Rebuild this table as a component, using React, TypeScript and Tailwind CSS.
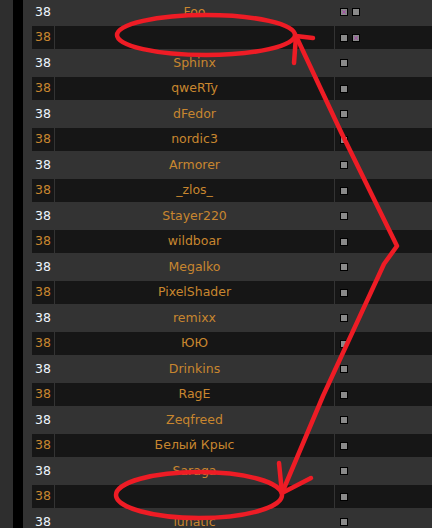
type Row = { name: string; checks?: ("on" | "off")[] };

const rows: Row[] = [
  { name: "Foo", checks: ["on", "off"] },
  { name: "", checks: ["off", "on"] },
  { name: "Sphinx" },
  { name: "qweRTy" },
  { name: "dFedor" },
  { name: "nordic3" },
  { name: "Armorer" },
  { name: "_zlos_" },
  { name: "Stayer220" },
  { name: "wildboar" },
  { name: "Megalko" },
  { name: "PixelShader" },
  { name: "remixx" },
  { name: "ЮЮ" },
  { name: "Drinkins" },
  { name: "RagE" },
  { name: "Zeqfreed" },
  { name: "Белый Крыс" },
  { name: "Saraga" },
  { name: "" },
  { name: "lunatic" },
];

function Box({ on }: { on?: boolean }) {
  return (
    <span className="w-[8px] h-[8px] border border-black bg-[#8a8a8a] flex items-center justify-center">
      {on && (
        <svg width={6} height={6} viewBox="0 0 6 6">
          <path d="M1 1L5 5M5 1L1 5" stroke="#a24fa6" strokeWidth={1} />
        </svg>
      )}
    </span>
  );
}

function TableRow({ row, dark }: { row: Row; dark: boolean }) {
  const checks = row.checks ?? ["off"];
  return (
    <div
      className={
        dark
          ? "h-[23px] shrink-0 flex gap-px bg-[#333333]"
          : "h-[28px] shrink-0 flex gap-px bg-[#333333]"
      }
    >
      <div
        className={
          dark
            ? "w-[22px] flex items-center justify-center bg-[#161616] text-[#c8862f]"
            : "w-[22px] flex items-center justify-center text-[#eef6ff]"
        }
      >
        38
      </div>
      <div
        className={
          dark
            ? "w-[279px] flex items-center justify-center bg-[#161616] text-[#c8862f]"
            : "w-[279px] flex items-center justify-center text-[#c8862f]"
        }
      >
        {row.name}
      </div>
      <div
        className={
          dark
            ? "flex-1 flex items-center gap-[4px] pl-[5px] bg-[#161616]"
            : "flex-1 flex items-center gap-[4px] pl-[5px]"
        }
      >
        {checks.map((c, i) => (
          <Box key={i} on={c === "on"} />
        ))}
      </div>
    </div>
  );
}

export default function App() {
  return (
    <div className="relative w-[432px] h-[528px] overflow-hidden flex bg-[#333333] text-[12.5px] font-['DejaVu_Sans',sans-serif]">
      <div className="w-[13px] bg-[#2e2e2e]" />
      <div className="w-[10px] bg-black" />
      <div className="w-[9px] bg-[#333333]" />
      <div className="flex-1 flex flex-col -mt-[2px]">
        {rows.map((r, i) => (
          <TableRow key={i} row={r} dark={i % 2 === 1} />
        ))}
      </div>

      <svg
        className="absolute inset-0 pointer-events-none"
        width={432}
        height={528}
        viewBox="0 0 432 528"
        fill="none"
        stroke="#ee1c25"
        strokeWidth={4.5}
        strokeLinecap="round"
        strokeLinejoin="round"
      >
        <ellipse cx={206} cy={35} rx={89} ry={20} />
        <ellipse cx={199} cy={495} rx={83} ry={23} />
        <path d="M296 36 L313 38 M296 36 L294 63" />
        <path d="M296 36 L341 132 L397 246 L384 264 L323 396 L282 493" />
        <path d="M282 493 L279 463 M282 493 L311 478" />
      </svg>
    </div>
  );
}
